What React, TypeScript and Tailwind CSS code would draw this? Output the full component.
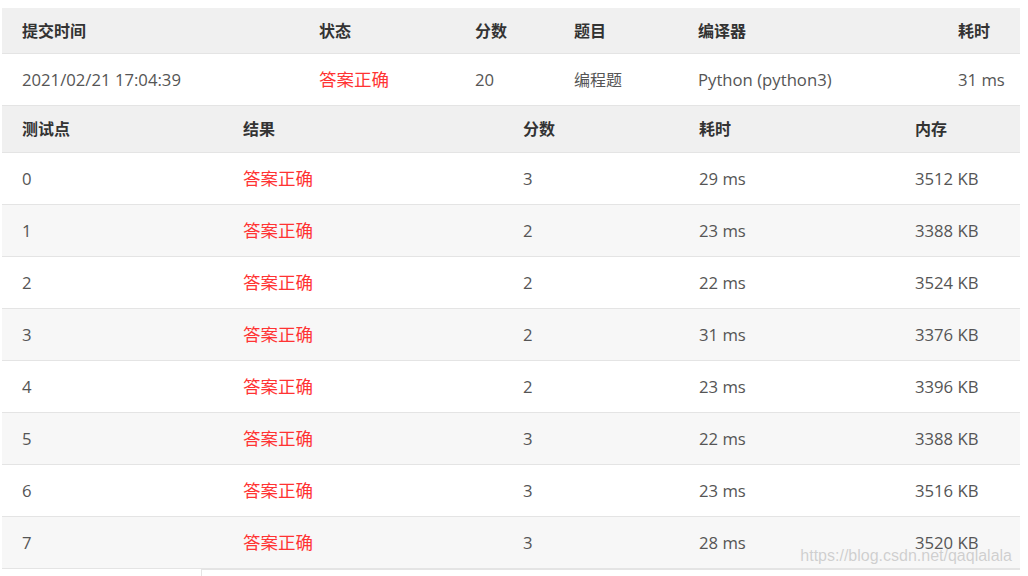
import * as React from 'react';

type Case = {
  id: number;
  score: number;
  time: string;
  memory: string;
};

const cases: Case[] = [
  { id: 0, score: 3, time: '29 ms', memory: '3512 KB' },
  { id: 1, score: 2, time: '23 ms', memory: '3388 KB' },
  { id: 2, score: 2, time: '22 ms', memory: '3524 KB' },
  { id: 3, score: 2, time: '31 ms', memory: '3376 KB' },
  { id: 4, score: 2, time: '23 ms', memory: '3396 KB' },
  { id: 5, score: 3, time: '22 ms', memory: '3388 KB' },
  { id: 6, score: 3, time: '23 ms', memory: '3516 KB' },
  { id: 7, score: 3, time: '28 ms', memory: '3520 KB' },
];

const font = { fontFamily: '"Open Sans", "Noto Sans CJK SC", sans-serif' };

export default function App() {
  return (
    <div className="w-[1028px] h-[576px] overflow-hidden bg-white pt-2 pl-[2px]" style={font}>
      <div className="relative w-[1018px]">
        {/* Submission summary */}
        <div className="flex h-[46px] items-center bg-[#f0f0f0] border-b border-[#e4e4e4] text-[16px] font-bold text-[#333]">
          <div className="w-[317px] pl-5">提交时间</div>
          <div className="w-[156px]">状态</div>
          <div className="w-[99px]">分数</div>
          <div className="w-[124px]">题目</div>
          <div className="w-[260px]">编译器</div>
          <div>耗时</div>
        </div>
        <div className="flex h-[52px] items-center bg-white border-b border-[#e4e4e4] text-[16.7px] text-[#555]">
          <div className="w-[317px] pl-5">2021/02/21 17:04:39</div>
          <div className="w-[156px] text-[17.5px] text-[#f33]">答案正确</div>
          <div className="w-[99px]">20</div>
          <div className="w-[124px] text-[16px]">编程题</div>
          <div className="w-[260px]">Python (python3)</div>
          <div>31 ms</div>
        </div>

        {/* Test cases */}
        <div className="flex h-[47px] items-center bg-[#f0f0f0] border-b border-[#e4e4e4] text-[16px] font-bold text-[#333]">
          <div className="w-[241px] pl-5">测试点</div>
          <div className="w-[280px]">结果</div>
          <div className="w-[176px]">分数</div>
          <div className="w-[216px]">耗时</div>
          <div>内存</div>
        </div>
        {cases.map((c) => (
          <div
            key={c.id}
            className={`flex h-[52px] items-center border-b border-[#e4e4e4] text-[16.7px] text-[#555] ${
              c.id % 2 === 1 ? 'bg-[#f7f7f7]' : 'bg-white'
            }`}
          >
            <div className="w-[241px] pl-5">{c.id}</div>
            <div className="w-[280px] text-[17.5px] text-[#f33]">答案正确</div>
            <div className="w-[176px]">{c.score}</div>
            <div className="w-[216px]">{c.time}</div>
            <div>{c.memory}</div>
          </div>
        ))}

        <div className="ml-[199px] h-[8px] border-l border-t border-[#e4e4e4]" />

        {/* Watermark */}
        <div
          className="absolute right-[8px] bottom-[9px] text-[16px] text-[#cfcfcf] [text-shadow:0_0_1px_#ffffff]"
          style={{ fontFamily: '"Liberation Sans", Arial, sans-serif' }}
        >
          https://blog.csdn.net/qaqlalala
        </div>
      </div>
    </div>
  );
}
